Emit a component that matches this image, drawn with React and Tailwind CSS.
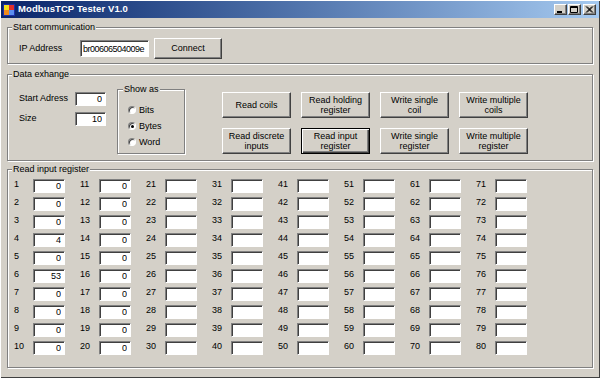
import React from 'react';

const raised = 'border border-t-white border-l-white border-r-[#404040] border-b-[#404040] shadow-[inset_-1px_-1px_0_#808080] bg-[#d4d0c8]';
const sunken = 'border border-t-[#808080] border-l-[#808080] border-b-white border-r-white shadow-[inset_1px_1px_0_#404040] bg-white';
const groupBox = 'relative border border-[#808080] shadow-[inset_1px_1px_0_#fff,1px_1px_0_#fff]';

const GroupLabel = ({ children }) => (
    <span className="absolute left-[4px] -top-[6px] px-[1px] bg-[#d4d0c8] leading-[11px] whitespace-nowrap">
        {children}
    </span>
);

const TitleIcon = () => (
    <svg width="12" height="12" viewBox="0 0 12 12">
        <rect x="0" y="0" width="12" height="12" fill="#1c2fa8" />
        <rect x="1" y="1" width="5" height="5" fill="#f5e11a" />
        <rect x="6" y="1" width="5" height="5" fill="#e0302a" />
        <rect x="1" y="6" width="5" height="5" fill="#f08a1a" />
        <rect x="6" y="6" width="5" height="5" fill="#5a8ef0" />
    </svg>
);

const CaptionButton = ({ kind, className = '' }) => (
    <div className={`${raised} w-[13px] h-[11px] flex items-center justify-center ${className}`}>
        <svg width="9" height="7" viewBox="0 0 9 7">
            {kind === 'min' && <rect x="1" y="5" width="5" height="2" fill="#000" />}
            {kind === 'max' && (
                <path d="M0.5 0.5h7v6h-7z M0.5 1.5h7" fill="none" stroke="#000" strokeWidth="1" />
            )}
            {kind === 'close' && (
                <path d="M1 0.5l6 6M7 0.5l-6 6M2 0.5l6 6M8 0.5l-6 6" stroke="#000" strokeWidth="1" />
            )}
        </svg>
    </div>
);

const Button = ({ children, isDefault }) => (
    <div
        className={
            isDefault
                ? 'w-[69px] h-[26px] flex items-center justify-center text-center leading-[10px] bg-[#d4d0c8] border border-black shadow-[inset_1px_1px_0_#fff,inset_-1px_-1px_0_#404040,inset_-2px_-2px_0_#808080]'
                : `${raised} w-[69px] h-[26px] flex items-center justify-center text-center leading-[10px]`
        }
    >
        {children}
    </div>
);

const Radio = ({ label, checked }) => (
    <div className="flex items-center h-[16px]">
        <div className="w-[8px] h-[8px] rounded-full bg-white border border-t-[#808080] border-l-[#808080] border-b-white border-r-white shadow-[inset_1px_1px_0_#404040] flex items-center justify-center">
            {checked && <div className="w-[3px] h-[3px] rounded-full bg-black" />}
        </div>
        <span className="ml-[3px] leading-[11px]">{label}</span>
    </div>
);

const firstValues = ['0', '0', '0', '4', '0', '53', '0', '0', '0', '0'];

const registerValue = (col, row) => {
    if (col === 0) return firstValues[row];
    if (col === 1) return '0';
    return '';
};

export default function App() {
    const columns = [0, 1, 2, 3, 4, 5, 6, 7];
    const rows = [0, 1, 2, 3, 4, 5, 6, 7, 8, 9];

    return (
        <div className="w-[600px] h-[378px] bg-[#d4d0c8] pt-[1px] px-[1px] font-['Liberation_Sans',Arial,sans-serif] text-[9px] text-black overflow-hidden shadow-[inset_1px_1px_0_#fff,inset_-1px_-1px_0_#404040]">
            {/* title bar */}
            <div className="h-[17px] flex items-center pl-[2px] pr-[3px] bg-gradient-to-r from-[#0a246a] to-[#a6caf0]">
                <TitleIcon />
                <span className="ml-[3px] text-white font-bold text-[9.5px] tracking-[0.1px]">ModbusTCP Tester V1.0</span>
                <div className="ml-auto flex items-center">
                    <CaptionButton kind="min" />
                    <CaptionButton kind="max" className="ml-[1px]" />
                    <CaptionButton kind="close" className="ml-[2px]" />
                </div>
            </div>

            <div className="px-[6px]">
                {/* start communication */}
                <div className={`${groupBox} mt-[9px] h-[37px] pl-[11px] pt-[10px]`}>
                    <GroupLabel>Start communication</GroupLabel>
                    <div className="flex items-center h-[21px]">
                        <span className="w-[61px]">IP Address</span>
                        <input
                            readOnly
                            value="br00606504009e"
                            className={`${sunken} w-[69px] h-[17px] pl-[2px] tracking-[-0.5px] outline-none`}
                        />
                        <div className={`${raised} ml-[5px] w-[68px] h-[21px] flex items-center justify-center`}>Connect</div>
                    </div>
                </div>

                {/* data exchange */}
                <div className={`${groupBox} mt-[10px] h-[87px] pl-[11px] pt-[14px] flex items-start`}>
                    <GroupLabel>Data exhange</GroupLabel>
                    <div className="mt-[3px] flex flex-col gap-[6px]">
                        <div className="flex items-center h-[14px]">
                            <span className="w-[56px]">Start Adress</span>
                            <input readOnly value="0" className={`${sunken} w-[31px] h-[14px] text-right pr-[3px] outline-none`} />
                        </div>
                        <div className="flex items-center h-[14px]">
                            <span className="w-[56px]">Size</span>
                            <input readOnly value="10" className={`${sunken} w-[31px] h-[14px] text-right pr-[3px] outline-none`} />
                        </div>
                    </div>

                    <div className={`${groupBox} ml-[11px] w-[68px] h-[65px] pl-[10px] pt-[12px]`}>
                        <span className="absolute left-[5px] -top-[6px] px-[1px] bg-[#d4d0c8] leading-[11px]">Show as</span>
                        <Radio label="Bits" />
                        <Radio label="Bytes" checked />
                        <Radio label="Word" />
                    </div>

                    <div className="ml-[37px] mt-[3px] grid grid-cols-[69px_69px_69px_69px] gap-x-[10px] gap-y-[10px]">
                        <Button>Read coils</Button>
                        <Button>Read holding<br />register</Button>
                        <Button>Write single<br />coil</Button>
                        <Button>Write multiple<br />coils</Button>
                        <Button>Read discrete<br />inputs</Button>
                        <Button isDefault>Read input<br />register</Button>
                        <Button>Write single<br />register</Button>
                        <Button>Write multiple<br />register</Button>
                    </div>
                </div>

                {/* read input register */}
                <div className={`${groupBox} mt-[8px] h-[199px] pl-[6px] pt-[9px]`}>
                    <GroupLabel>Read input register</GroupLabel>
                    <div className="flex gap-[15px]">
                        {columns.map(col => (
                            <div key={col} className="flex flex-col gap-[4px]">
                                {rows.map(row => (
                                    <div key={row} className="flex items-start h-[14px]">
                                        <span className="w-[19px] leading-[11px]">{col * 10 + row + 1}</span>
                                        <input
                                            readOnly
                                            value={registerValue(col, row)}
                                            className={`${sunken} w-[32px] h-[14px] text-right pr-[3px] outline-none`}
                                        />
                                    </div>
                                ))}
                            </div>
                        ))}
                    </div>
                </div>
            </div>
        </div>
    );
}
